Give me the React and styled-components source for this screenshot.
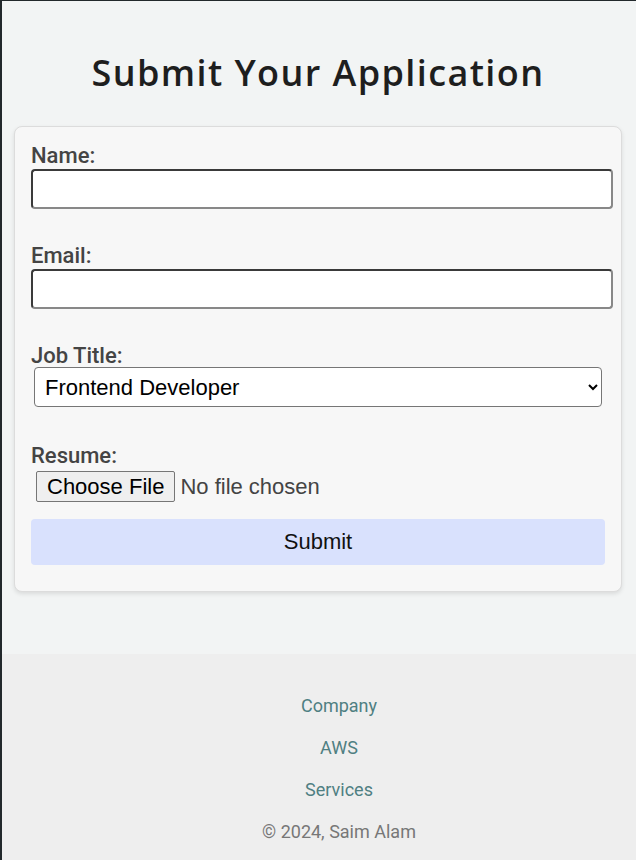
import styled, {createGlobalStyle} from "styled-components";

const GlobalStyle = createGlobalStyle`
  html, body {
    margin: 0;
    padding: 0;
    background: #f2f4f4;
  }
  body {
    font-family: Roboto, "Liberation Sans", sans-serif;
  }
`;

const Page = styled.div`
  min-height: 100vh;
  box-sizing: border-box;
  border-left: 2px solid #22282b;
  border-top: 1px solid #22282b;
  display: flex;
  flex-direction: column;
  background: #f2f4f4;
`;

const Main = styled.main`
  padding: 0 14px 62px 12px;
`;

const Title = styled.h1`
  margin: 50px 0 31px;
  font-family: "Open Sans", sans-serif;
  font-weight: 600;
  font-size: 36px;
  line-height: 44px;
  letter-spacing: 1.4px;
  text-align: center;
  color: #1e1e1e;
`;

const Card = styled.div`
  background: #f7f7f7;
  border: 1px solid #dcdcdc;
  border-radius: 8px;
  box-shadow: 0 2px 4px rgba(0, 0, 0, 0.1);
  padding: 16px 16px 26px;
`;

const Form = styled.form`
  display: flex;
  flex-direction: column;
`;

const Label = styled.label`
  display: block;
  font-family: Roboto, sans-serif;
  font-weight: 500;
  font-size: 22px;
  line-height: 26px;
  color: #444;
`;

const Field = styled.div`
  margin-bottom: ${(p) => p.gap || 34}px;
`;

const Input = styled.input`
  display: block;
  box-sizing: border-box;
  width: calc(100% + 8px);
  height: 40px;
  border: 2px solid;
  border-color: #3a3a3a #888 #888 #3a3a3a;
  border-radius: 4px;
  background: #fff;
  font-size: 20px;
  padding: 4px 8px;
`;

const Select = styled.select`
  display: block;
  box-sizing: border-box;
  width: calc(100% - 6px);
  height: 40px;
  margin: -2px 0 2px 3px;
  border: 1px solid #767676;
  border-radius: 4px;
  background: #fff;
  color: #000;
  font-family: "Liberation Sans", Arial, sans-serif;
  font-size: 22px;
  padding: 0 6px;
`;

const FileInput = styled.input`
  display: block;
  margin: 2px 0 0 5px;
  font-family: "Liberation Sans", Arial, sans-serif;
  font-size: 22px;
  color: #444;

  &::file-selector-button {
    font-family: "Liberation Sans", Arial, sans-serif;
    font-size: 22px;
    color: #000;
    background: #efefef;
    border: 1px solid #767676;
    border-radius: 2px;
    padding: 0 10px;
    margin-right: 5px;
    height: 31px;
  }
`;

const SubmitButton = styled.button`
  height: 46px;
  border: none;
  border-radius: 4px;
  background: #d9e1fd;
  color: #111;
  font-family: "Liberation Sans", Arial, sans-serif;
  font-size: 22px;
`;

const Footer = styled.footer`
  background: #eeeeee;
  padding: 31px 0 7px 40px;
  display: flex;
  flex-direction: column;
  align-items: center;
`;

const FooterLink = styled.a`
  font-family: Roboto, sans-serif;
  font-size: 18px;
  line-height: 42px;
  color: ${(p) => (p.muted ? "#777" : "#4f7f82")};
  text-decoration: none;
`;

export default function App() {
  return (
    <>
      <GlobalStyle />
      <Page>
        <Main>
          <Title>Submit Your Application</Title>
          <Card>
            <Form onSubmit={(e) => e.preventDefault()}>
              <Field>
                <Label htmlFor="name">Name:</Label>
                <Input id="name" type="text" />
              </Field>
              <Field>
                <Label htmlFor="email">Email:</Label>
                <Input id="email" type="email" />
              </Field>
              <Field>
                <Label htmlFor="job">Job Title:</Label>
                <Select id="job" defaultValue="Frontend Developer">
                  <option>Frontend Developer</option>
                  <option>Backend Developer</option>
                  <option>Full Stack Developer</option>
                </Select>
              </Field>
              <Field gap={17}>
                <Label htmlFor="resume">Resume:</Label>
                <FileInput id="resume" type="file" />
              </Field>
              <SubmitButton type="submit">Submit</SubmitButton>
            </Form>
          </Card>
        </Main>
        <Footer>
          <FooterLink href="#">Company</FooterLink>
          <FooterLink href="#">AWS</FooterLink>
          <FooterLink href="#">Services</FooterLink>
          <FooterLink as="span" muted>© 2024, Saim Alam</FooterLink>
        </Footer>
      </Page>
    </>
  );
}
